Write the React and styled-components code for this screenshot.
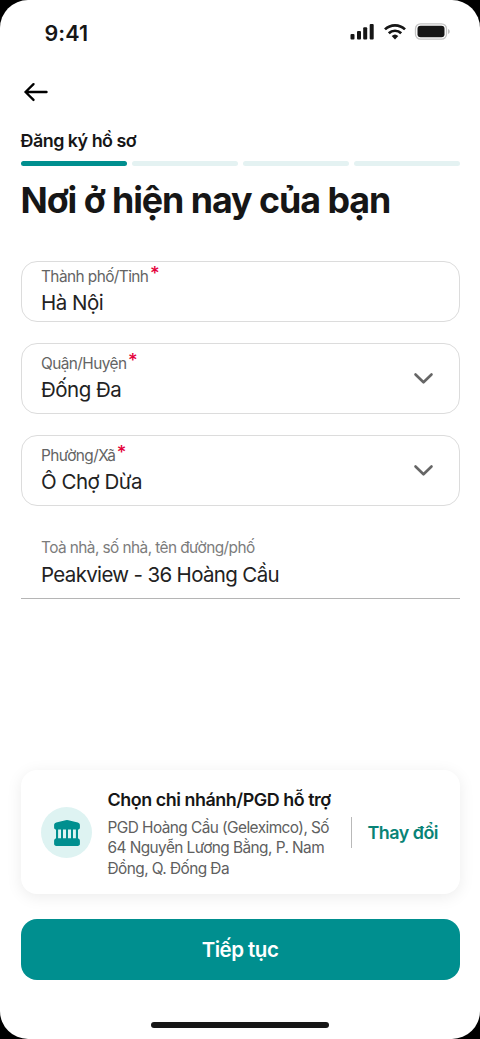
import React, { useState } from 'react';
import styled, { createGlobalStyle } from 'styled-components';

const GlobalStyle = createGlobalStyle`
  * {
    box-sizing: border-box;
  }

  body {
    margin: 0;
    background-color: #000;
    font-family: Inter, 'Liberation Sans', sans-serif;
    color: #161616;
  }

  button,
  input {
    font-family: inherit;
  }
`;

const Screen = styled.div`
  display: flex;
  flex-direction: column;
  width: 480px;
  height: 1039px;
  padding: 0 20.5px;
  border-radius: 28px;
  background-color: #fff;
  overflow: hidden;
`;

const StatusBar = styled.div`
  display: flex;
  align-items: center;
  justify-content: space-between;
  height: 66px;
  padding: 0 10px 0 24px;
`;

const Time = styled.span`
  font-size: 21.5px;
  font-weight: 600;
  letter-spacing: 0.1px;
  line-height: 26px;
`;

const StatusIcons = styled.svg`
  display: block;
  margin-top: -3px;
`;

const BackButton = styled.button`
  display: flex;
  width: 31px;
  height: 31px;
  margin: 11px 0 0 -1px;
  padding: 0;
  border: none;
  background: none;
  cursor: pointer;
`;

const StepName = styled.div`
  margin-top: 22px;
  font-size: 17.9px;
  font-weight: 600;
  letter-spacing: -0.5px;
  line-height: 22px;
`;

const Steps = styled.div`
  display: flex;
  gap: 5px;
  margin-top: 9px;
`;

const Step = styled.div`
  flex: 1;
  height: 5px;
  border-radius: 3px;
  background-color: ${({ $active }) => ($active ? '#008f8f' : '#e4f2f2')};
`;

const Title = styled.h1`
  margin: 12px 0 0;
  font-size: 35.8px;
  font-weight: 700;
  letter-spacing: -1.05px;
  line-height: 44px;
  white-space: nowrap;
`;

const Form = styled.form`
  display: flex;
  flex-direction: column;
  gap: 21px;
  margin-top: 39px;
`;

const Field = styled.label`
  display: flex;
  align-items: center;
  justify-content: space-between;
  height: ${({ $height }) => $height}px;
  padding: 0 20px 0 19.5px;
  border: 1px solid #dcdcdc;
  border-radius: 16px;
`;

const LineField = styled(Field)`
  height: 72px;
  padding: 1px 20.5px 0;
  border-width: 0 0 1px;
  border-color: #b5b5b5;
  border-radius: 0;
`;

const FieldBody = styled.span`
  display: flex;
  flex: 1;
  flex-direction: column;
`;

const Label = styled.span`
  display: flex;
  height: 21px;
  font-size: 15.4px;
  font-weight: 370;
  letter-spacing: -0.57px;
  line-height: 21px;
  color: ${({ $light }) => ($light ? '#7c7c7c' : '#646464')};
`;

const Required = styled.span`
  margin: -3px 0 0 1.5px;
  color: #e4003a;
  font-size: 18.5px;
  font-weight: 450;
`;

const Input = styled.input`
  width: 100%;
  height: 31px;
  padding: 1px 0 0;
  border: none;
  outline: none;
  background: none;
  color: #222;
  font-size: 20.5px;
  letter-spacing: ${({ $spacing }) => $spacing || -0.66}px;
`;

const Footer = styled.div`
  margin-top: auto;
`;

const BranchCard = styled.div`
  display: flex;
  align-items: center;
  height: 124px;
  padding: 1px 20.5px 0;
  border-radius: 16px;
  background-color: #fff;
  box-shadow: 0 3px 16px rgba(0, 0, 0, 0.08);
`;

const BranchIcon = styled.div`
  display: flex;
  flex: none;
  align-items: center;
  justify-content: center;
  width: 51px;
  height: 51px;
  border-radius: 50%;
  background-color: #def3f2;
`;

const BranchInfo = styled.div`
  flex: none;
  width: 259px;
  padding: 2px 0 0 15.5px;
`;

const BranchTitle = styled.div`
  margin-bottom: 7px;
  font-size: 17.9px;
  font-weight: 600;
  letter-spacing: -0.45px;
  line-height: 23px;
  white-space: nowrap;
`;

const BranchAddress = styled.div`
  color: #606060;
  font-size: 15.4px;
  font-weight: 370;
  letter-spacing: -0.56px;
  line-height: 20.5px;
  white-space: nowrap;
`;

const Divider = styled.div`
  flex: none;
  width: 1px;
  height: 31px;
  margin-right: 15.5px;
  background-color: #b9b9b9;
`;

const ChangeButton = styled.button`
  padding: 0;
  border: none;
  background: none;
  color: #088376;
  font-size: 17.9px;
  font-weight: 600;
  letter-spacing: -0.5px;
  white-space: nowrap;
  cursor: pointer;
`;

const SubmitButton = styled.button`
  display: block;
  width: 100%;
  height: 61px;
  margin-top: 25px;
  border: none;
  border-radius: 16px;
  background-color: #008f8f;
  color: #fff;
  font-size: 20.5px;
  font-weight: 600;
  letter-spacing: -0.5px;
  cursor: pointer;
`;

const HomeIndicator = styled.div`
  width: 178px;
  height: 6px;
  margin: 42px auto 11px;
  border-radius: 3px;
  background-color: #161616;
`;

const ArrowLeft = () => (
  <svg width="31" height="31" viewBox="0 0 31 31" fill="none">
    <path
      d="M26.5 15H5.5M13.5 7.2L5.5 15l8 7.9"
      stroke="#000"
      strokeWidth="2.4"
      strokeLinecap="round"
      strokeLinejoin="round"
    />
  </svg>
);

const ChevronDown = () => (
  <svg width="31" height="31" viewBox="0 0 31 31" fill="none">
    <path
      d="M7.5 11.5L15.5 19.3 23.5 11.5"
      stroke="#666"
      strokeWidth="2.6"
      strokeLinecap="round"
      strokeLinejoin="round"
    />
  </svg>
);

const Bank = () => (
  <svg width="28" height="28" viewBox="0 0 28 28" fill="#008f8f">
    <path d="M12.6 1.2a4 4 0 0 1 2.8 0l9.4 2.2c1.3.4 2.1 1.3 2.1 2.6v2.4c0 1.3-.9 2.2-2.2 2.2H3.3c-1.3 0-2.2-.9-2.2-2.2V6c0-1.3.8-2.2 2.1-2.6z" />
    <path d="M3 10h2.1v10H3zM8 10h2v10H8zM13 10h2v10h-2zM18 10h2v10h-2zM22.9 10H25v10h-2.1z" />
    <path d="M3.8 19.2h20.4c1.6 0 2.7 1.1 2.7 2.7v2.9c0 1.3-.9 2.2-2.2 2.2H3.3c-1.3 0-2.2-.9-2.2-2.2v-2.9c0-1.6 1.1-2.7 2.7-2.7z" />
  </svg>
);

const SystemIcons = () => (
  <StatusIcons width="100" height="18" viewBox="0 0 100 18" fill="#161616">
    <rect x="0.5" y="11" width="4" height="5.5" rx="1" />
    <rect x="7" y="8" width="4" height="8.5" rx="1" />
    <rect x="13.2" y="4.3" width="4" height="12.2" rx="1" />
    <rect x="19.7" y="1" width="4" height="15.5" rx="1" />
    <g fill="none" stroke="#161616" strokeWidth="2.7">
      <path d="M35 6.4a14.2 14.2 0 0 1 20 0" />
      <path d="M38.8 10.3a8.8 8.8 0 0 1 12.4 0" />
    </g>
    <path d="M41.7 13a4.9 4.9 0 0 1 6.6 0L45 16.4z" />
    <rect
      x="65.5"
      y="0.8"
      width="31"
      height="15.4"
      rx="5"
      fill="none"
      stroke="#c4c4c4"
      strokeWidth="1.3"
    />
    <rect x="67.5" y="2.8" width="27" height="11.4" rx="3" />
    <path d="M98.2 6v5c1.9-.7 1.9-4.3 0-5z" fill="#b0b0b0" />
  </StatusIcons>
);

const App = () => {
  const [street, setStreet] = useState('Peakview - 36 Hoàng Cầu');

  const fields = [
    { label: 'Thành phố/Tỉnh', value: 'Hà Nội', height: 61 },
    { label: 'Quận/Huyện', value: 'Đống Đa', height: 71, select: true },
    { label: 'Phường/Xã', value: 'Ô Chợ Dừa', height: 71, select: true },
  ];

  return (
    <>
      <GlobalStyle />
      <Screen>
        <StatusBar>
          <Time>9:41</Time>
          <SystemIcons />
        </StatusBar>
        <BackButton type="button" aria-label="Quay lại">
          <ArrowLeft />
        </BackButton>
        <StepName>Đăng ký hồ sơ</StepName>
        <Steps>
          {[0, 1, 2, 3].map((step) => (
            <Step key={step} $active={step === 0} />
          ))}
        </Steps>
        <Title>Nơi ở hiện nay của bạn</Title>
        <Form>
          {fields.map((field) => (
            <Field key={field.label} $height={field.height}>
              <FieldBody>
                <Label>
                  {field.label}
                  <Required>*</Required>
                </Label>
                <Input readOnly value={field.value} $spacing={-0.5} />
              </FieldBody>
              {field.select && <ChevronDown />}
            </Field>
          ))}
          <LineField>
            <FieldBody>
              <Label $light>Toà nhà, số nhà, tên đường/phố</Label>
              <Input value={street} onChange={(e) => setStreet(e.target.value)} />
            </FieldBody>
          </LineField>
        </Form>
        <Footer>
          <BranchCard>
            <BranchIcon>
              <Bank />
            </BranchIcon>
            <BranchInfo>
              <BranchTitle>Chọn chi nhánh/PGD hỗ trợ</BranchTitle>
              <BranchAddress>
                PGD Hoàng Cầu (Geleximco), Số
                <br />
                64 Nguyễn Lương Bằng, P. Nam
                <br />
                Đồng, Q. Đống Đa
              </BranchAddress>
            </BranchInfo>
            <Divider />
            <ChangeButton type="button">Thay đổi</ChangeButton>
          </BranchCard>
          <SubmitButton type="button">Tiếp tục</SubmitButton>
          <HomeIndicator />
        </Footer>
      </Screen>
    </>
  );
};

export default App;
